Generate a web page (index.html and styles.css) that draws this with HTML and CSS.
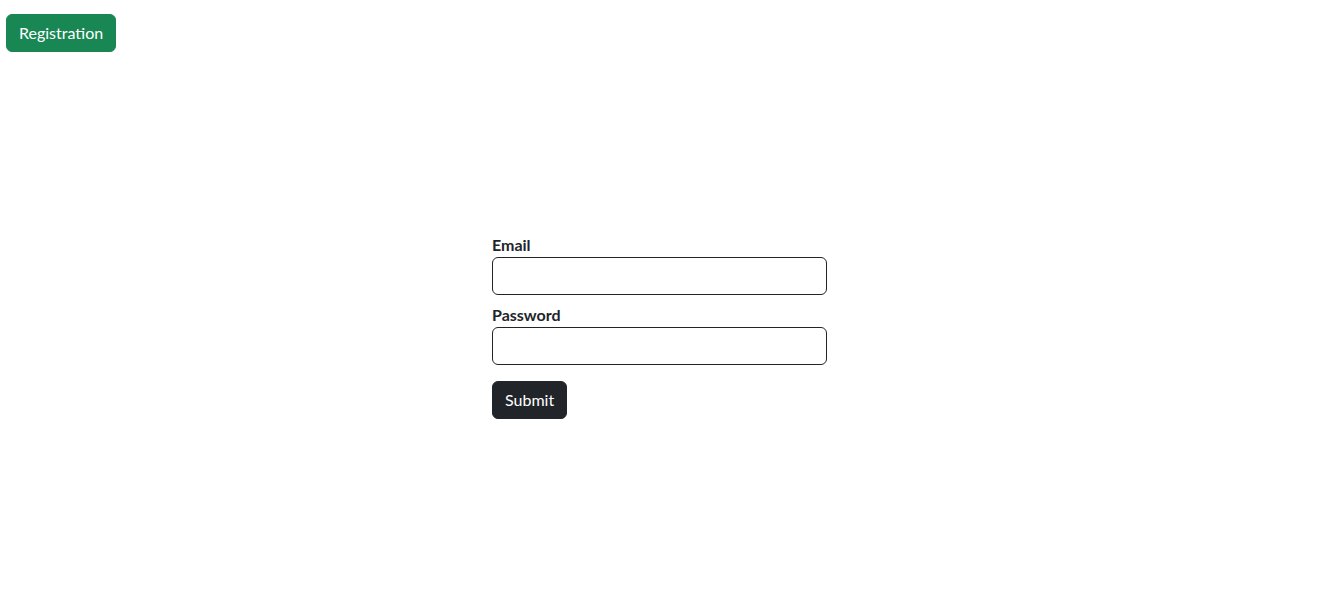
FILE: index.html
```html
<!DOCTYPE html>
<html lang="en">
<head>
  <meta charset="UTF-8">
  <meta name="viewport" content="width=device-width, initial-scale=1.0">
  <title>Login</title>
  <link rel="stylesheet" href="styles.css">
</head>
<body>
  <div class="topbar">
    <button class="btn btn-green">Registration</button>
  </div>

  <div class="page">
    <form class="login-form">
      <label for="email">Email</label>
      <input type="email" id="email">

      <label for="password">Password</label>
      <input type="password" id="password">

      <button type="submit" class="btn btn-dark">Submit</button>
    </form>
  </div>
</body>
</html>
```

FILE: styles.css
```css
body {
  font-family: Lato, "Open Sans", sans-serif;
  font-size: 16px;
  line-height: 24px;
  margin: 0;
  padding: 0;
  background: #fff;
  color: #212529;
}

.topbar {
  padding: 14px 6px 0;
}

.btn {
  font-family: inherit;
  font-size: 16px;
  line-height: 24px;
  padding: 6px 12px;
  border: 1px solid transparent;
  border-radius: 6px;
  color: #fff;
  cursor: pointer;
}

.btn-green {
  background-color: #198754;
  border-color: #198754;
}

.btn-dark {
  background-color: #212529;
  border-color: #212529;
  margin-top: 16px;
}

.page {
  display: flex;
  justify-content: center;
  padding-right: 21px;
  margin-top: 181px;
}

.login-form {
  width: 335px;
  display: flex;
  flex-direction: column;
  align-items: flex-start;
}

label {
  font-weight: bold;
  display: block;
}

input {
  box-sizing: border-box;
  width: 100%;
  height: 38px;
  padding: 6px 12px;
  border: 1px solid #212529;
  border-radius: 6px;
  font-size: 16px;
  margin: 0 0 8px;
}

input:last-of-type {
  margin-bottom: 0;
}
```
